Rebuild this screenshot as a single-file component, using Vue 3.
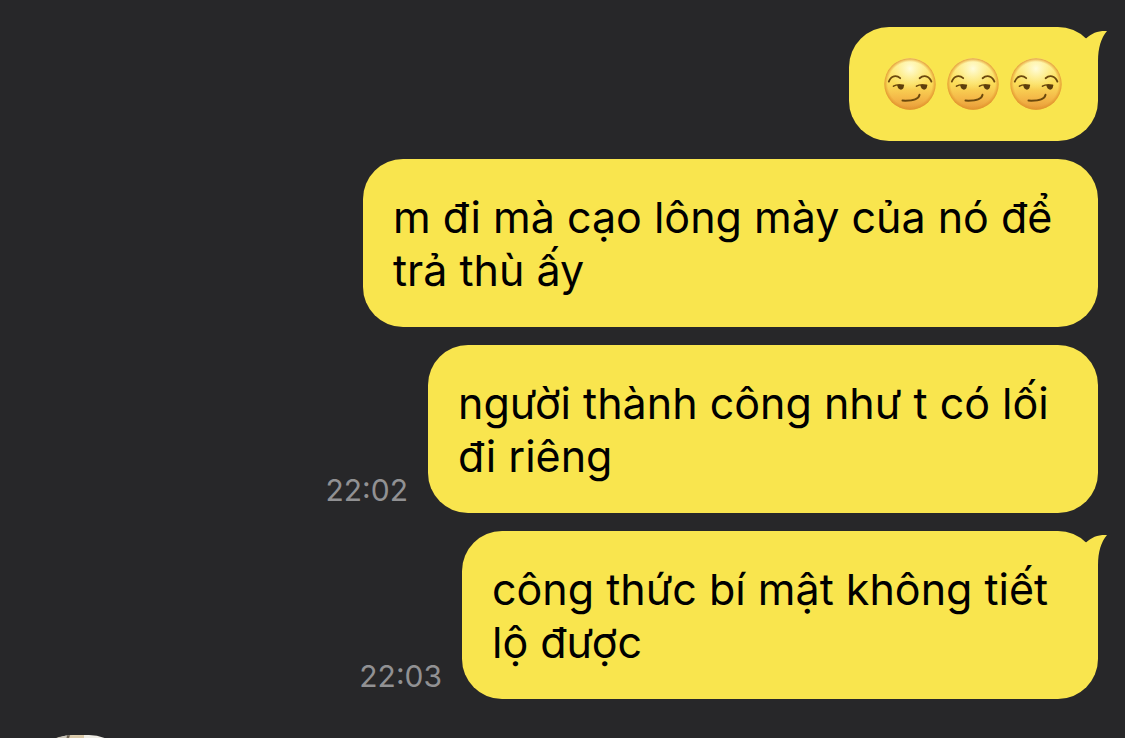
<script setup>
const messages = [
  { id: 1, emoji: 3, label: 'Smirking face', tail: true },
  { id: 2, text: 'm đi mà cạo lông mày của nó để\ntrả thù ấy', size: 'wide' },
  { id: 3, text: 'người thành công như t có lối\nđi riêng', time: '22:02', size: 'medium' },
  { id: 4, text: 'công thức bí mật không tiết\nlộ được', time: '22:03', size: 'narrow', tail: true },
]
</script>

<template>
  <main class="chat">
    <svg class="defs" aria-hidden="true">
      <defs>
        <linearGradient id="face" x1="0" y1="0" x2="0" y2="1">
          <stop offset="0" stop-color="#fff08a" />
          <stop offset="0.5" stop-color="#fbdc58" />
          <stop offset="0.78" stop-color="#f4b848" />
          <stop offset="1" stop-color="#e79a38" />
        </linearGradient>
        <radialGradient id="shine" cx="0.5" cy="0.2" r="0.42">
          <stop offset="0" stop-color="#fffde0" stop-opacity="0.95" />
          <stop offset="1" stop-color="#fff6a0" stop-opacity="0" />
        </radialGradient>
        <radialGradient id="rim" cx="0.5" cy="0.5" r="0.5">
          <stop offset="0.86" stop-color="#e59a2c" stop-opacity="0" />
          <stop offset="1" stop-color="#e0922c" stop-opacity="0.85" />
        </radialGradient>
      </defs>
    </svg>

    <ol class="thread">
      <li v-for="m in messages" :key="m.id" class="row">
        <time v-if="m.time" class="time">{{ m.time }}</time>
        <div class="bubble" :class="[m.size, { emojis: m.emoji }]">
          <template v-if="m.emoji">
            <svg v-for="n in m.emoji" :key="n" class="emoji" viewBox="0 0 52 52" role="img" :aria-label="m.label">
              <circle cx="26" cy="26" r="25.7" fill="url(#face)" />
              <circle cx="26" cy="26" r="25.7" fill="url(#shine)" />
              <circle cx="26" cy="26" r="25.7" fill="url(#rim)" />
              <g fill="none" stroke="#6b480d" stroke-linecap="round">
                <path d="M4.8 23.6C7 17.6 12.5 16.8 16.2 20.2" stroke-width="1.8" />
                <path d="M35.6 20.2C39.5 16.8 45 17.6 47.4 23.6" stroke-width="1.8" />
                <path d="M9.5 28.2C12 26.6 16 26.6 19.4 27.2" stroke-width="1.6" />
                <path d="M32.5 28.2C35 26.6 39 26.6 42.6 27.2" stroke-width="1.6" />
                <path d="M18.5 42.6C26 42.9 34.5 42.5 35.5 36.8" stroke-width="2" />
              </g>
              <g fill="#5d3e0c">
                <path d="M13.2 27H19.9C20.4 33.4 13.6 33 13.2 27Z" />
                <path d="M36.4 27H43.1C43.6 33.4 36.8 33 36.4 27Z" />
              </g>
            </svg>
          </template>
          <p v-else class="text">{{ m.text }}</p>
          <svg v-if="m.tail" class="tail" viewBox="0 0 30 40" aria-hidden="true">
            <path d="M8 11.5C14 6 20 3.6 29 4C23 11 20 21 20 34V40H2V11.5Z" />
          </svg>
        </div>
      </li>
    </ol>
    <div class="next">
      <svg class="avatar" viewBox="0 0 100 100" role="img" aria-label="Avatar">
        <rect width="100" height="100" rx="42" fill="#eeece4" />
        <path d="M28 1.9L36 0.6L33 12H20V5Z" fill="#c9c3b6" />
        <path d="M36 0.6L39 0.2L37 12H33Z" fill="#6b604e" />
        <path d="M39 0.2L53 0V12H37Z" fill="#d9c8a7" />
      </svg>
    </div>
  </main>
</template>

<style>
body {
  margin: 0;
  background: #272729;
}
</style>

<style scoped>
.chat {
  box-sizing: border-box;
  height: 100vh;
  overflow: hidden;
  padding: 27px 27px 0;
  background: #272729;
  font-family: Inter, "Noto Sans", sans-serif;
}
.defs {
  position: absolute;
  width: 0;
  height: 0;
}
.thread {
  display: flex;
  flex-direction: column;
  gap: 18px;
  margin: 0;
  padding: 0;
  list-style: none;
}
.row {
  display: flex;
  justify-content: flex-end;
  align-items: flex-end;
  gap: 20px;
}
.bubble {
  position: relative;
  box-sizing: border-box;
  padding: 32px 36px 30px 30px;
  border-radius: 40px;
  background: #f9e54e;
  color: #000;
}
.wide {
  min-width: 735px;
}
.medium {
  min-width: 670px;
}
.narrow {
  min-width: 636px;
}
.emojis {
  display: flex;
  gap: 11px;
  padding: 31px 36px 31px 35px;
}
.emoji {
  display: block;
  width: 52px;
  height: 52px;
}
.text {
  margin: 0;
  font-size: 43px;
  line-height: 53px;
  white-space: pre-line;
}
.time {
  padding-bottom: 5px;
  color: #919193;
  font-size: 30px;
  line-height: 36px;
}
.tail {
  position: absolute;
  top: 0;
  right: -10px;
  width: 30px;
  height: 40px;
  fill: #f9e54e;
}
.next {
  padding: 36px 4px 0;
}
.avatar {
  display: block;
  width: 100px;
  height: 100px;
}
</style>
